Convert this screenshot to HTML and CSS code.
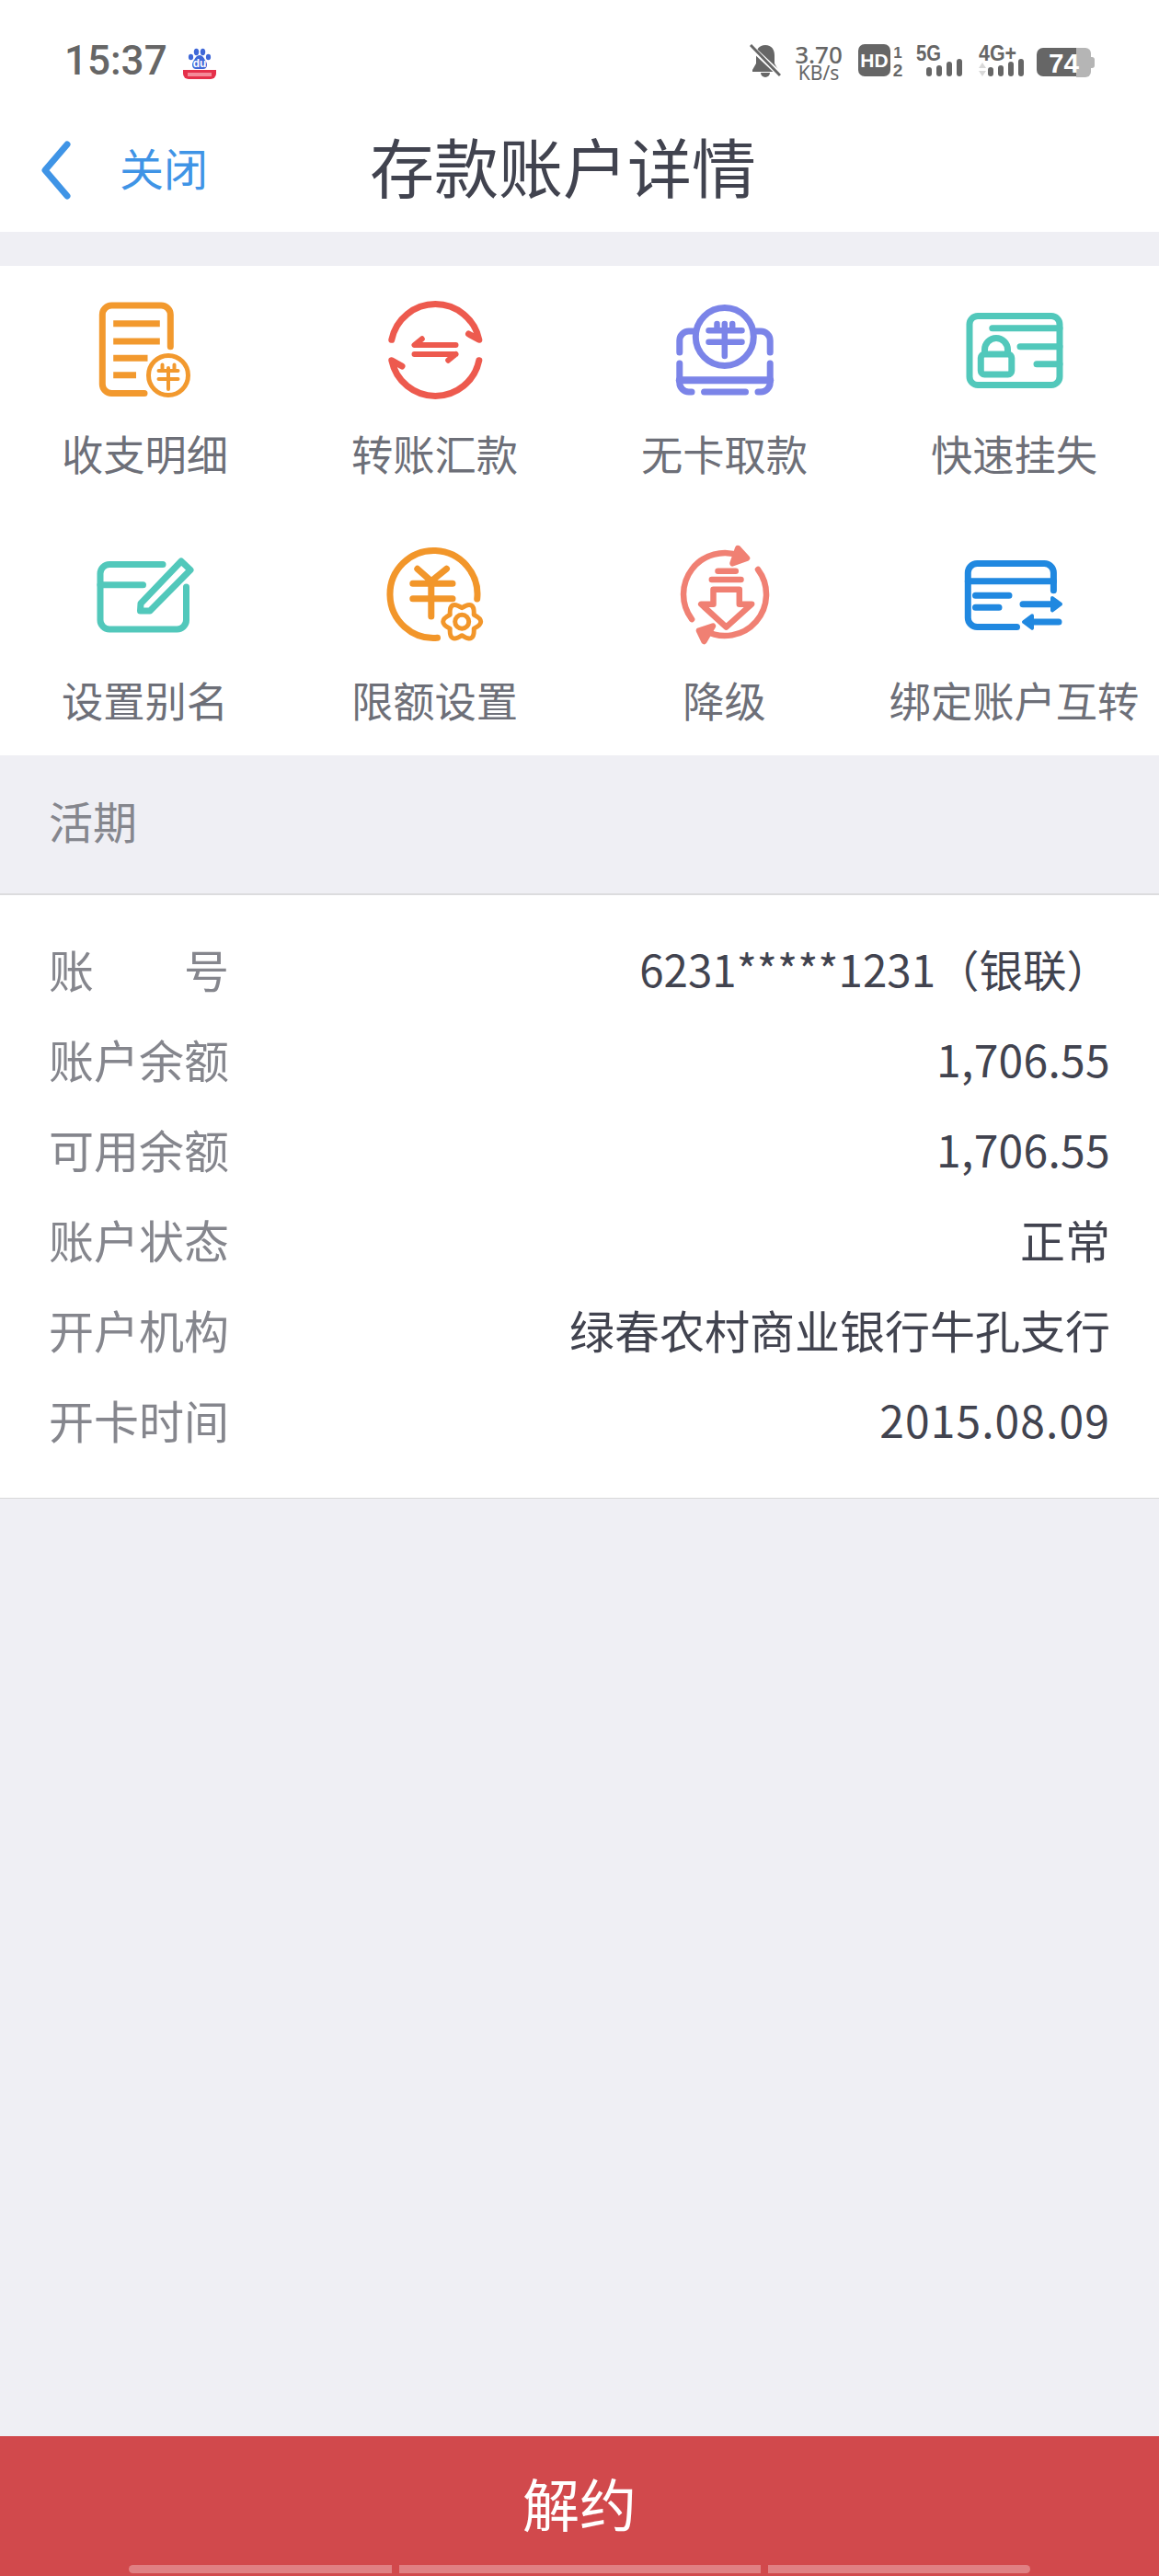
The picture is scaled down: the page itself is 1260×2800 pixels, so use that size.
FILE: index.html
```html
<!DOCTYPE html>
<html lang="zh-CN">
<head>
    <meta charset="UTF-8">
    <meta name="viewport" content="width=device-width, initial-scale=1.0">
    <title>存款账户详情</title>
    <link rel="stylesheet" href="styles.css">
</head>
<body>
    <div class="page">
        <header class="top">
            <div class="status-bar">
                <div class="status-left">
                    <span class="time">15:37</span>
                    <svg class="baidu" width="36" height="34" viewBox="0 0 36 34">
                        <g fill="#3f68d8">
                            <ellipse cx="8.500" cy="10" rx="2.600" ry="3.200"/>
                            <ellipse cx="14.500" cy="4.500" rx="2.700" ry="3.700"/>
                            <ellipse cx="21.500" cy="4.500" rx="2.700" ry="3.700"/>
                            <ellipse cx="27.500" cy="10" rx="2.600" ry="3.200"/>
                            <path d="M18 8c-4 0-5 4-7 7-2 3-1 8 3 8h8c4 0 5-5 3-8-2-3-3-7-7-7z"/>
                        </g>
                        <text class="baidu-du" x="18" y="21" text-anchor="middle">du</text>
                        <path d="M0 24h36v4a6 6 0 0 1-6 6H6a6 6 0 0 1-6-6z" fill="#e5304a"/>
                        <rect x="5" y="27" width="26" height="4" fill="#f48a98"/>
                    </svg>
                </div>
                <div class="status-right">
                    <svg class="st-bell" width="34" height="36" viewBox="0 0 34 36">
                        <path d="M17 1c-7 0-10 5-10 11v9l-4 7v2h28v-2l-4-7v-9C27 6 24 1 17 1z" fill="#666"/>
                        <path d="M12 31a5 5 0 0 0 10 0z" fill="#666"/>
                        <path d="M-1 1l34 32" stroke="#fff" stroke-width="6"/>
                        <path d="M1 1l32 33" stroke="#666" stroke-width="3"/>
                    </svg>
                    <div class="st-speed">
                        <span class="st-speed-num">3.70</span>
                        <span class="st-speed-unit">KB/s</span>
                    </div>
                    <svg class="st-hd" width="50" height="44" viewBox="0 0 50 44">
                        <rect x="0" y="0" width="35" height="35" rx="7" fill="#666"/>
                        <text class="st-bold" x="17.500" y="25" font-size="21" fill="#fff" text-anchor="middle">HD</text>
                        <text class="st-bold" x="43" y="15" font-size="17" fill="#666" text-anchor="middle">1</text>
                        <text class="st-bold" x="43" y="35" font-size="19" fill="#666" text-anchor="middle">2</text>
                    </svg>
                    <svg class="st-5g" width="53" height="52" viewBox="0 -8 53 52">
                        <text class="st-bold" x="0" y="18" font-size="24" fill="#666" textLength="27" lengthAdjust="spacingAndGlyphs">5G</text>
                        <g fill="#666">
                            <rect x="11" y="25" width="6" height="10" rx="3"/>
                            <rect x="22" y="23" width="6" height="12" rx="3"/>
                            <rect x="33" y="19" width="6" height="16" rx="3"/>
                            <rect x="44" y="16" width="6" height="19" rx="3"/>
                        </g>
                    </svg>
                    <svg class="st-4g" width="52" height="52" viewBox="0 -8 52 52">
                        <text class="st-bold" x="0" y="18" font-size="24" fill="#666" textLength="41" lengthAdjust="spacingAndGlyphs">4G+</text>
                        <path d="M0 26l4-6 4 6zM0 29l4 6 4-6z" fill="#d8d8d8"/>
                        <g fill="#666">
                            <rect x="10" y="25" width="6" height="10" rx="3"/>
                            <rect x="21" y="23" width="6" height="12" rx="3"/>
                            <rect x="32" y="19" width="6" height="16" rx="3"/>
                            <rect x="43" y="16" width="6" height="19" rx="3"/>
                        </g>
                    </svg>
                    <svg class="st-battery" width="63" height="40" viewBox="0 0 63 40">
                        <path d="M43 0h10a6 6 0 0 1 6 6v20a6 6 0 0 1-6 6H43z" fill="#b5b5b5"/>
                        <path d="M59 10h1a3 3 0 0 1 3 3v6a3 3 0 0 1-3 3h-1z" fill="#b5b5b5"/>
                        <path d="M7 0h36v31H7a7 7 0 0 1-7-7V7a7 7 0 0 1 7-7z" fill="#666"/>
                        <text class="st-bold" x="13" y="27" font-size="30" fill="#fff" textLength="33" lengthAdjust="spacingAndGlyphs">74</text>
                    </svg>
                </div>
            </div>
            <nav class="nav-bar">
                <svg class="back" width="40" height="68" viewBox="0 0 40 68">
                    <path d="M32 6L8 34l24 28" fill="none" stroke="#3f94e6" stroke-width="7" stroke-linecap="round" stroke-linejoin="round"/>
                </svg>
                <a class="close">关闭</a>
                <h1 class="title">存款账户详情</h1>
            </nav>
        </header>

        <section class="actions">
            <div class="action">
                <svg class="action-icon" viewBox="0 0 120 120" fill="none" stroke="#f2992e" stroke-width="7">
                    <path d="M87.300 56.700V22a10 10 0 0 0-10-10H23.300a10 10 0 0 0-10 10V97.500a10 10 0 0 0 10 10H59" stroke-linecap="round"/>
                    <path d="M25.200 31.700H75.800M25.200 51H75.800M25.200 69.300H62.500M25.200 87.700H50"/>
                    <circle cx="85" cy="88" r="21.500" stroke-width="5"/>
                    <path d="M78.500 76.500v6M91.500 76.500v6M74.500 83h21M74.500 92h21M85 80v23" stroke-width="4" stroke-linecap="round"/>
                </svg>
                <span class="action-label">收支明细</span>
            </div>
            <div class="action">
                <svg class="action-icon" viewBox="0 0 120 120" fill="none" stroke="#ed5a4e" stroke-width="7" stroke-linecap="round" stroke-linejoin="round">
                    <path d="M12.800 49.300A48.500 48.500 0 0 1 107.800 49.300L96.500 43"/>
                    <path d="M107.800 71.700A48.500 48.500 0 0 1 12.800 71.700L24 78"/>
                    <path d="M45.800 48.300L37.500 55H82.500M82.500 65H37.500M82.500 65L74.200 71.700" stroke-width="6"/>
                </svg>
                <span class="action-label">转账汇款</span>
            </div>
            <div class="action">
                <svg class="action-icon" viewBox="0 0 120 120" fill="none" stroke="#7b84e8" stroke-width="7" stroke-linecap="round">
                    <circle cx="59.800" cy="46" r="31.500"/>
                    <path d="M51.500 32v6M68.200 32v6M42.500 39.300h36M42.500 51.700h36M59.800 32v35" stroke-width="6.500"/>
                    <path d="M10.800 63V50a10 10 0 0 1 10-10H26M109.200 63V50a10 10 0 0 0-10-10H94"/>
                    <path d="M10.800 75V96a10 10 0 0 0 10 10H24M37.500 106H82.500M96 106h3.200a10 10 0 0 0 10-10V75"/>
                    <path d="M10.800 93.300H109.200" stroke-width="8"/>
                </svg>
                <span class="action-label">无卡取款</span>
            </div>
            <div class="action">
                <svg class="action-icon" viewBox="0 0 120 120" fill="none" stroke="#52c8bb" stroke-width="7" stroke-linecap="round">
                    <rect x="11" y="23.500" width="98" height="75" rx="9"/>
                    <path d="M35.800 36.700H109M66 56.700H109M84 75.700H109"/>
                    <rect x="23.300" y="65" width="33.500" height="22" rx="4"/>
                    <path d="M27.500 64V60a12.500 12.500 0 0 1 25 0v4"/>
                </svg>
                <span class="action-label">快速挂失</span>
            </div>
            <div class="action">
                <svg class="action-icon" viewBox="0 0 120 120" fill="none" stroke="#52c8bb" stroke-width="7" stroke-linecap="round" stroke-linejoin="round">
                    <path d="M79 25.500H21a10 10 0 0 0-10 10V86a10 10 0 0 0 10 10H94.500a10 10 0 0 0 10-10V50"/>
                    <path d="M11 47.700H57.500"/>
                    <path d="M55 68L99 22l10 9.500L65 76H54.500z" stroke-width="7"/>
                </svg>
                <span class="action-label">设置别名</span>
            </div>
            <div class="action">
                <svg class="action-icon" viewBox="0 0 120 120" fill="none" stroke="#f2962a" stroke-width="7" stroke-linecap="round">
                    <path d="M105.700 63A47.500 47.500 0 1 0 62.500 105.300"/>
                    <path d="M40.800 30.300L55.800 43.700L72.500 30.300M35.800 46.300H79M35.800 62.700H79M55.800 43.700V82"/>
                    <g transform="translate(89.200 87.700)" stroke-width="5" stroke-linejoin="round">
                        <path d="M13-7.500Q28 0 13 7.500Q14 24.200 0 15Q-14 24.200-13 7.500Q-28 0-13-7.500Q-14-24.200 0-15Q14-24.200 13-7.500Z" fill="#fff"/>
                        <circle r="7.500"/>
                    </g>
                </svg>
                <span class="action-label">限额设置</span>
            </div>
            <div class="action">
                <svg class="action-icon" viewBox="0 0 120 120" fill="none" stroke="#f08073" stroke-width="6.500" stroke-linecap="round" stroke-linejoin="round">
                    <path d="M24.100 85.100A45 45 0 0 1 76.900 16.300"/>
                    <path d="M96 31A45 45 0 0 1 38.200 97.400"/>
                    <path d="M74.200 8L84 18.700 68.500 24.300z" fill="#f08073"/>
                    <path d="M32 97.500L47 92.500 37.500 109z" fill="#f08073"/>
                    <path d="M52.500 32.700H71.800M45.800 42H77.500"/>
                    <path d="M47.500 68.700V52.700H75.800V68.700H89.200L61.500 93.700 34.200 68.700z"/>
                </svg>
                <span class="action-label">降级</span>
            </div>
            <div class="action">
                <svg class="action-icon" viewBox="0 0 120 120" fill="none" stroke="#2088e0" stroke-width="7" stroke-linecap="round" stroke-linejoin="round">
                    <path d="M102.400 53.700V34.500a10 10 0 0 0-10-10H19.300a10 10 0 0 0-10 10V83.500a10 10 0 0 0 10 10H62.500"/>
                    <path d="M9.300 43.700H102.400M17.500 59.300H54M17.500 72.300H43"/>
                    <path d="M69 68.700H104M74 88H108"/>
                    <path d="M101 62l9 6.700-9 6.700zM79 81.300l-9 6.700 9 6.700z" fill="#2088e0" stroke-width="4"/>
                </svg>
                <span class="action-label">绑定账户互转</span>
            </div>
        </section>

        <div class="section-title">活期</div>

        <section class="details">
            <div class="row"><span class="row-key row-key-wide"><i>账</i><i>号</i></span><span class="row-value row-value-card">6231*****1231（银联）</span></div>
            <div class="row"><span class="row-key">账户余额</span><span class="row-value">1,706.55</span></div>
            <div class="row"><span class="row-key">可用余额</span><span class="row-value">1,706.55</span></div>
            <div class="row"><span class="row-key">账户状态</span><span class="row-value row-value-zh">正常</span></div>
            <div class="row"><span class="row-key">开户机构</span><span class="row-value row-value-zh">绿春农村商业银行牛孔支行</span></div>
            <div class="row"><span class="row-key">开卡时间</span><span class="row-value row-value-date">2015.08.09</span></div>
        </section>

        <div class="spacer"></div>

        <footer class="cancel">
            <span class="cancel-label">解约</span>
            <div class="gesture">
                <span class="gesture-a"></span>
                <span class="gesture-b"></span>
                <span class="gesture-c"></span>
            </div>
        </footer>
    </div>
</body>
</html>
```

FILE: styles.css
```css
* {
    box-sizing: border-box;
}

body {
    margin: 0;
    padding: 0;
    background-color: #efeff4;
    font-family: "Noto Sans CJK SC", "Noto Sans", sans-serif;
}

svg {
    display: block;
    flex: none;
}

.page {
    width: 1260px;
    height: 2800px;
    display: flex;
    flex-direction: column;
}

/* Barra de estado y cabecera */
.top {
    height: 252px;
    background-color: #fff;
}

.status-bar {
    height: 118px;
    padding: 48px 70px 0;
    display: flex;
    justify-content: space-between;
    align-items: flex-start;
}

.status-left {
    display: flex;
    align-items: flex-start;
}

.time {
    font-family: Roboto, sans-serif;
    font-size: 44px;
    font-weight: 500;
    line-height: 36px;
    color: #666;
}

.baidu {
    margin: 4px 0 0 17px;
}

.baidu-du {
    font-family: "Liberation Sans", sans-serif;
    font-size: 12px;
    font-weight: 700;
    fill: #fff;
}

.status-right {
    display: flex;
    align-items: flex-start;
}

.st-speed {
    width: 52px;
    margin-left: 15px;
    display: flex;
    flex-direction: column;
    align-items: center;
    font-family: "Noto Sans", sans-serif;
    color: #666;
}

.st-speed-num {
    font-size: 26px;
    font-weight: 500;
    line-height: 22px;
}

.st-speed-unit {
    font-size: 21px;
    line-height: 19px;
}

.st-hd {
    margin-left: 17px;
}

.st-5g {
    margin: -8px 0 0 13px;
}

.st-4g {
    margin: -8px 0 0 15px;
}

.st-battery {
    margin: 4px 0 0 11px;
}

.st-bold {
    font-family: "Liberation Sans", sans-serif;
    font-weight: 700;
}

.nav-bar {
    height: 134px;
    padding-left: 41px;
    display: flex;
    align-items: center;
}

.close {
    margin: 0 0 8px 49px;
    font-size: 48px;
    line-height: 60px;
    color: #3f94e6;
}

.title {
    margin: 0 0 10px 176px;
    font-size: 70px;
    font-weight: 400;
    line-height: 90px;
    color: #41434f;
}

/* Accesos */
.actions {
    margin-top: 37px;
    padding: 31px 0 31px;
    display: grid;
    grid-template-columns: repeat(4, 315px);
    row-gap: 66px;
    background-color: #fff;
}

.action {
    display: flex;
    flex-direction: column;
    align-items: center;
}

.action-icon {
    width: 120px;
    height: 120px;
}

.action-label {
    margin-top: 22px;
    font-size: 45.300px;
    line-height: 60px;
    white-space: nowrap;
    color: #6d6f78;
}

/* Detalle */
.section-title {
    height: 152px;
    padding: 0 0 10px 53px;
    border-bottom: 2px solid #dcdcde;
    display: flex;
    align-items: center;
    font-size: 48px;
    color: #85868d;
}

.details {
    padding: 30px 53px 37px;
    border-bottom: 1px solid #d8d8d8;
    background-color: #fff;
}

.row {
    height: 98px;
    display: flex;
    justify-content: space-between;
    align-items: center;
    font-size: 48px;
}

.row-key {
    font-size: 49px;
    color: #85868d;
}

.row-key-wide {
    width: 196px;
    display: flex;
    justify-content: space-between;
}

.row-key-wide i {
    font-style: normal;
}

.row-value {
    letter-spacing: 0.3px;
    color: #41434f;
}

.row-value-card {
    letter-spacing: 0;
    font-size: 47.500px;
}

.row-value-date {
    letter-spacing: 1.100px;
}

.row-value-zh {
    letter-spacing: 0;
    font-size: 49px;
}

.spacer {
    flex: 1;
}

/* Boton inferior */
.cancel {
    height: 152px;
    background-color: #d1494c;
    display: flex;
    flex-direction: column;
    align-items: center;
}

.cancel-label {
    margin-top: 27px;
    font-size: 62px;
    line-height: 90px;
    color: #fff;
}

.gesture {
    margin-top: 23px;
    display: flex;
    gap: 8px;
}

.gesture span {
    height: 9px;
    background-color: #e08083;
}

.gesture-a {
    width: 286px;
    border-radius: 5px 0 0 5px;
}

.gesture-b {
    width: 393px;
}

.gesture-c {
    width: 285px;
    border-radius: 0 5px 5px 0;
}
```
